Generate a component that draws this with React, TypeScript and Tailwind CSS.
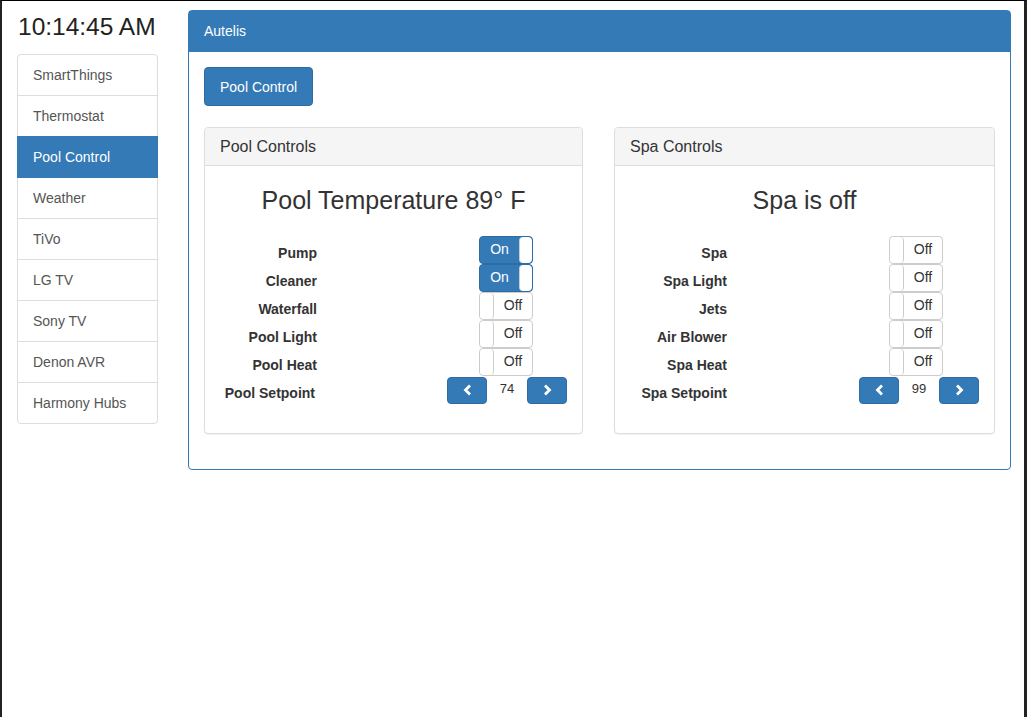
import { FC } from "react";

const navItems = [
  "SmartThings",
  "Thermostat",
  "Pool Control",
  "Weather",
  "TiVo",
  "LG TV",
  "Sony TV",
  "Denon AVR",
  "Harmony Hubs",
];

interface ToggleProps {
  on: boolean;
}

const Toggle: FC<ToggleProps> = ({ on }) => {
  if (on) {
    return (
      <div className="flex w-[54px] h-[28px] rounded-[4px] border border-[#2e6da4] bg-[#337ab7] overflow-hidden">
        <div className="w-[39px] text-center text-white text-[14px] leading-[24px]">
          On
        </div>
        <div className="flex-1 bg-white rounded-[4px] border-l border-[#ccc]" />
      </div>
    );
  }
  return (
    <div className="flex w-[54px] h-[28px] rounded-[4px] border border-[#ccc] bg-white overflow-hidden">
      <div className="w-[14px] bg-white rounded-[4px] border-r border-[#ccc]" />
      <div className="flex-1 text-center text-[#333] text-[14px] leading-[24px]">
        Off
      </div>
    </div>
  );
};

const Chevron: FC<{ dir: "left" | "right" }> = ({ dir }) => (
  <svg width="9" height="12" viewBox="0 0 9 12">
    <polyline
      points={dir === "left" ? "7,1.5 2.5,6 7,10.5" : "2,1.5 6.5,6 2,10.5"}
      fill="none"
      stroke="white"
      strokeWidth="2.8"
    />
  </svg>
);

const Setpoint: FC<{ value: number }> = ({ value }) => (
  <div className="flex items-center">
    <button
      type="button"
      className="w-[40px] h-[27px] flex items-center justify-center rounded-[4px] border border-[#2e6da4] bg-[#337ab7]"
    >
      <Chevron dir="left" />
    </button>
    <div className="w-[40px] text-center text-[13px] text-[#333] leading-[20px] -mt-[3px]">
      {value}
    </div>
    <button
      type="button"
      className="w-[40px] h-[27px] flex items-center justify-center rounded-[4px] border border-[#2e6da4] bg-[#337ab7]"
    >
      <Chevron dir="right" />
    </button>
  </div>
);

interface ControlPanelProps {
  title: string;
  status: string;
  toggles: { label: string; on: boolean }[];
  setpointLabel: string;
  setpoint: number;
}

const ControlPanel: FC<ControlPanelProps> = ({
  title,
  status,
  toggles,
  setpointLabel,
  setpoint,
}) => (
  <div className="border border-[#ddd] rounded-[4px] bg-white shadow-[0_1px_1px_rgba(0,0,0,0.05)]">
    <div className="bg-[#f5f5f5] border-b border-[#ddd] rounded-t-[3px] px-[15px] py-[10px] text-[16px] leading-[17px] text-[#333]">
      {title}
    </div>
    <div className="px-[15px] pt-[21px] pb-[29px]">
      <div className="text-center text-[25px] leading-[26px] text-[#333]">
        {status}
      </div>
      <div className="mt-[23px] flex flex-col">
        {toggles.map((t) => (
          <div key={t.label} className="flex items-center h-[28px]">
            <div className="w-[97px] text-right font-bold text-[14px] text-[#333] pt-[6px]">
              {t.label}
            </div>
            <div className="ml-[162px]">
              <Toggle on={t.on} />
            </div>
          </div>
        ))}
        <div className="flex items-center h-[28px]">
          <div className="w-[97px] text-right font-bold text-[14px] text-[#333] pt-[6px]">
            {setpointLabel}
          </div>
          <div className="ml-[132px]">
            <Setpoint value={setpoint} />
          </div>
        </div>
      </div>
    </div>
  </div>
);

export default function App() {
  return (
    <div className="h-[717px] bg-white border-t border-t-black border-l-2 border-l-[#222] border-r-[3px] border-r-[#222] flex pl-[15px] pr-[13px] font-['Liberation_Sans',Arial,sans-serif] text-[14px] text-[#333] overflow-hidden">
      <div className="w-[141px] flex flex-col">
        <div className="mt-[13px] text-[24.5px] leading-[26px] text-[#222] pl-[1px]">
          10:14:45 AM
        </div>
        <div className="mt-[14px] flex flex-col">
          {navItems.map((item, i) => {
            const active = item === "Pool Control";
            return (
              <div
                key={item}
                className={`px-[15px] py-[10px] leading-[20px] border ${
                  i > 0 ? "-mt-px" : ""
                } ${i === 0 ? "rounded-t-[4px]" : ""} ${
                  i === navItems.length - 1 ? "rounded-b-[4px]" : ""
                } ${
                  active
                    ? "bg-[#337ab7] border-[#337ab7] text-white relative z-10"
                    : "bg-white border-[#ddd] text-[#555]"
                }`}
              >
                {item}
              </div>
            );
          })}
        </div>
      </div>
      <div className="flex-1 ml-[30px] mt-[9px] self-start border border-[#337ab7] rounded-[4px] bg-white">
        <div className="bg-[#337ab7] text-white px-[15px] py-[10px] leading-[21px] text-[14px]">
          Autelis
        </div>
        <div className="p-[15px]">
          <button
            type="button"
            className="h-[39px] px-[15px] pt-[1px] rounded-[4px] bg-[#337ab7] border border-[#2e6da4] text-white text-[14px]"
          >
            Pool Control
          </button>
          <div className="mt-[21px] grid grid-cols-[379px_1fr] gap-[31px] mb-[20px]">
            <ControlPanel
              title="Pool Controls"
              status="Pool Temperature 89° F"
              toggles={[
                { label: "Pump", on: true },
                { label: "Cleaner", on: true },
                { label: "Waterfall", on: false },
                { label: "Pool Light", on: false },
                { label: "Pool Heat", on: false },
              ]}
              setpointLabel="Pool Setpoint"
              setpoint={74}
            />
            <ControlPanel
              title="Spa Controls"
              status="Spa is off"
              toggles={[
                { label: "Spa", on: false },
                { label: "Spa Light", on: false },
                { label: "Jets", on: false },
                { label: "Air Blower", on: false },
                { label: "Spa Heat", on: false },
              ]}
              setpointLabel="Spa Setpoint"
              setpoint={99}
            />
          </div>
        </div>
      </div>
    </div>
  );
}
